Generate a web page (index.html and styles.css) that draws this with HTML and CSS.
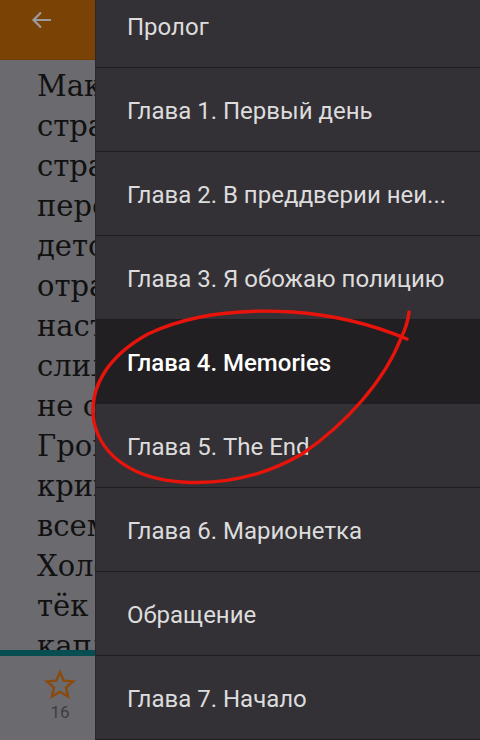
FILE: index.html
```html
<!DOCTYPE html>
<html lang="ru">
<head>
  <meta charset="UTF-8" />
  <meta name="viewport" content="width=device-width, initial-scale=1.0"/>
  <title>Оглавление</title>
  <link rel="stylesheet" href="styles.css">
</head>
<body>
  <div class="screen">
    <div class="reader">
      <div class="topbar">
        <svg class="back" width="24" height="24" viewBox="0 0 24 24">
          <path d="M21 12H4M11 4.5L3.5 12 11 19.5" fill="none" stroke="#9b9b9b" stroke-width="2.2"/>
        </svg>
      </div>
      <div class="page-text">
        <div>Максим</div>
        <div>странно</div>
        <div>страшно</div>
        <div>перед</div>
        <div>детства</div>
        <div>отражение</div>
        <div>настолько</div>
        <div>слились</div>
        <div>не смог</div>
        <div>Гром</div>
        <div>крикнул</div>
        <div>всем</div>
        <div>Холод</div>
        <div>тёк по</div>
        <div>капли</div>
      </div>
      <div class="progress"></div>
      <div class="bottombar">
        <div class="fav">
          <svg width="32" height="32" viewBox="0 0 32 32">
            <path d="M16 3l3.7 8.6 9.3.8-7 6.1 2.1 9.1L16 22.8l-8.1 4.8 2.1-9.1-7-6.1 9.3-.8z" fill="none" stroke="#8a4a0c" stroke-width="2.4" stroke-linejoin="miter"/>
          </svg>
          <span class="count">16</span>
        </div>
      </div>
    </div>

    <div class="drawer">
      <ul class="chapters">
        <li>Пролог</li>
        <li>Глава 1. Первый день</li>
        <li>Глава 2. В преддверии неи...</li>
        <li>Глава 3. Я обожаю полицию</li>
        <li class="current">Глава 4. Memories</li>
        <li>Глава 5. The End</li>
        <li>Глава 6. Марионетка</li>
        <li>Обращение</li>
        <li>Глава 7. Начало</li>
      </ul>
    </div>

    <!-- обводка от руки поверх скриншота -->
    <svg class="scribble" width="480" height="740" viewBox="0 0 480 740">
      <path d="M409 312 C408 322 405 330 401 338 C385 380 346 424 302 454 C266 475 226 485 182 482 C136 479 102 458 94 422 C88 388 108 356 148 334 C190 314 242 309 292 312 C338 315 376 326 407 339"
            fill="none" stroke="#e8140c" stroke-width="3.4" stroke-linecap="round"/>
    </svg>
  </div>
</body>
</html>
```

FILE: styles.css
```css
html, body {
  margin: 0;
  padding: 0;
}
body {
  background-color: #333135;
  font-family: Roboto, 'Noto Sans', sans-serif;
}
.screen {
  position: relative;
  width: 480px;
  height: 740px;
  overflow: hidden;
  display: grid;
  grid-template-columns: 96px 1fr;
}
.reader {
  background-color: #6b6a6f;
  display: flex;
  flex-direction: column;
  overflow: hidden;
}
.topbar {
  height: 60px;
  flex: none;
  background-color: #7a4305;
  border-bottom: 1px solid #6f3d06;
  box-sizing: border-box;
}
.back {
  display: block;
  margin: 8px 0 0 30px;
}
.page-text {
  height: 590px;
  flex: none;
  overflow: hidden;
  padding: 6px 0 0 37px;
  box-sizing: border-box;
  font-family: 'DejaVu Serif', serif;
  font-size: 29px;
  line-height: 40px;
  color: #111;
  white-space: nowrap;
}
.progress {
  height: 6px;
  flex: none;
  background-color: #064e52;
}
.bottombar {
  flex: 1;
  display: flex;
}
.fav {
  flex: none;
  width: 120px;
  display: flex;
  flex-direction: column;
  align-items: center;
  padding-top: 13px;
}
.fav svg {
  display: block;
}
.count {
  font-size: 17px;
  line-height: 20px;
  color: #3d3d3f;
  margin-top: 1px;
}
.drawer {
  background-color: #333135;
  overflow: hidden;
  box-shadow: -1px 0 0 #2a282b;
}
.chapters {
  list-style: none;
  margin: -16px 0 0;
  padding: 0;
}
.chapters li {
  height: 84px;
  box-sizing: border-box;
  border-bottom: 1px solid #1e1d1f;
  padding: 3px 31px 0;
  display: flex;
  align-items: center;
  font-size: 24px;
  color: #dddcdd;
  white-space: nowrap;
  overflow: hidden;
}
.chapters li.current {
  background-color: #211f22;
  color: #fff;
  font-weight: 500;
}
.scribble {
  position: absolute;
  left: 0;
  top: 0;
  pointer-events: none;
}
```
